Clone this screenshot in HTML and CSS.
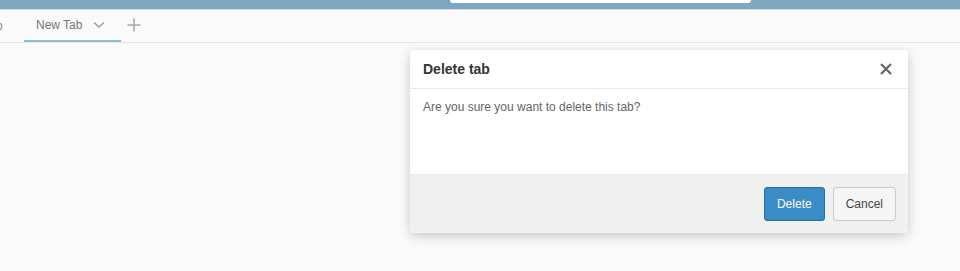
FILE: index.html
```html
<!DOCTYPE html>
<html lang="en">
<head>
    <meta charset="UTF-8">
    <link rel="stylesheet" href="styles.css">
</head>
<body>
    <div class="topbar">
        <div class="search"></div>
    </div>
    <div class="tabbar">
        <div class="tab-prev">o</div>
        <div class="tab active">
            <span class="tab-label">New Tab</span>
            <svg class="chevron" width="12" height="8" viewBox="0 0 12 8">
                <path d="M1 1.5 L6 6 L11 1.5" fill="none" stroke="#9a9a9a" stroke-width="1.4"/>
            </svg>
        </div>
        <svg class="add-tab" width="14" height="14" viewBox="0 0 14 14">
            <path d="M7 0.5 V13.5 M0.5 7 H13.5" stroke="#a8a8a8" stroke-width="1.6"/>
        </svg>
    </div>
    <div class="content">
        <div class="dialog">
            <div class="dialog-header">
                <span class="dialog-title">Delete tab</span>
                <svg class="close" width="12" height="12" viewBox="0 0 12 12">
                    <path d="M1 1 L11 11 M11 1 L1 11" stroke="#666" stroke-width="2.2"/>
                </svg>
            </div>
            <div class="dialog-body">Are you sure you want to delete this tab?</div>
            <div class="dialog-footer">
                <button class="btn btn-primary">Delete</button>
                <button class="btn">Cancel</button>
            </div>
        </div>
    </div>
</body>
</html>
```

FILE: styles.css
```css
body {
    margin: 0;
    background-color: #fafafa;
    font-family: "Liberation Sans", Arial, sans-serif;
}
.topbar {
    height: 9px;
    background-color: #7ea8c1;
    border-bottom: 1px solid #cbdfea;
}
.search {
    width: 301px;
    height: 3px;
    margin-left: 450px;
    background-color: white;
    border-radius: 0 0 4px 4px;
}
.tabbar {
    display: flex;
    align-items: center;
    height: 32px;
    border-bottom: 1px solid #e6e6e6;
    overflow: hidden;
}
.tab-prev {
    flex: 0 0 24px;
    font-size: 12px;
    color: #8a8a8a;
    text-indent: -4px;
}
.tab {
    display: flex;
    align-items: center;
    height: 30px;
    padding: 0 16px 0 12px;
    border-bottom: 2px solid transparent;
}
.tab.active {
    border-bottom-color: #8fbcd4;
}
.tab-label {
    font-size: 12px;
    color: #777;
    margin-right: 11px;
}
.add-tab {
    margin-left: 6px;
    margin-top: -2px;
}
.content {
    padding: 7px 0 20px 410px;
}
.dialog {
    width: 498px;
    background-color: white;
    border-radius: 4px;
    box-shadow: 0 3px 12px rgba(0,0,0,0.2);
    overflow: hidden;
}
.dialog-header {
    display: flex;
    justify-content: space-between;
    align-items: center;
    height: 38px;
    padding: 0 16px 0 13px;
    border-bottom: 1px solid #ebebeb;
}
.dialog-title {
    font-size: 14px;
    font-weight: bold;
    color: #333;
}
.dialog-body {
    height: 85px;
    padding: 11px 13px 0;
    box-sizing: border-box;
    font-size: 12px;
    color: #666;
}
.dialog-footer {
    display: flex;
    justify-content: flex-end;
    gap: 8px;
    height: 59px;
    padding: 12px 12px 0;
    box-sizing: border-box;
    background-color: #f0f0f0;
    border-top: 1px solid #ebebeb;
}
.btn {
    height: 34px;
    padding: 0 12px;
    font-family: "Liberation Sans", Arial, sans-serif;
    font-size: 12px;
    color: #444;
    background-color: #f5f5f5;
    border: 1px solid #ccc;
    border-radius: 3px;
}
.btn-primary {
    color: white;
    background-color: #3a8cc6;
    border-color: #2a6e9e;
}
```
